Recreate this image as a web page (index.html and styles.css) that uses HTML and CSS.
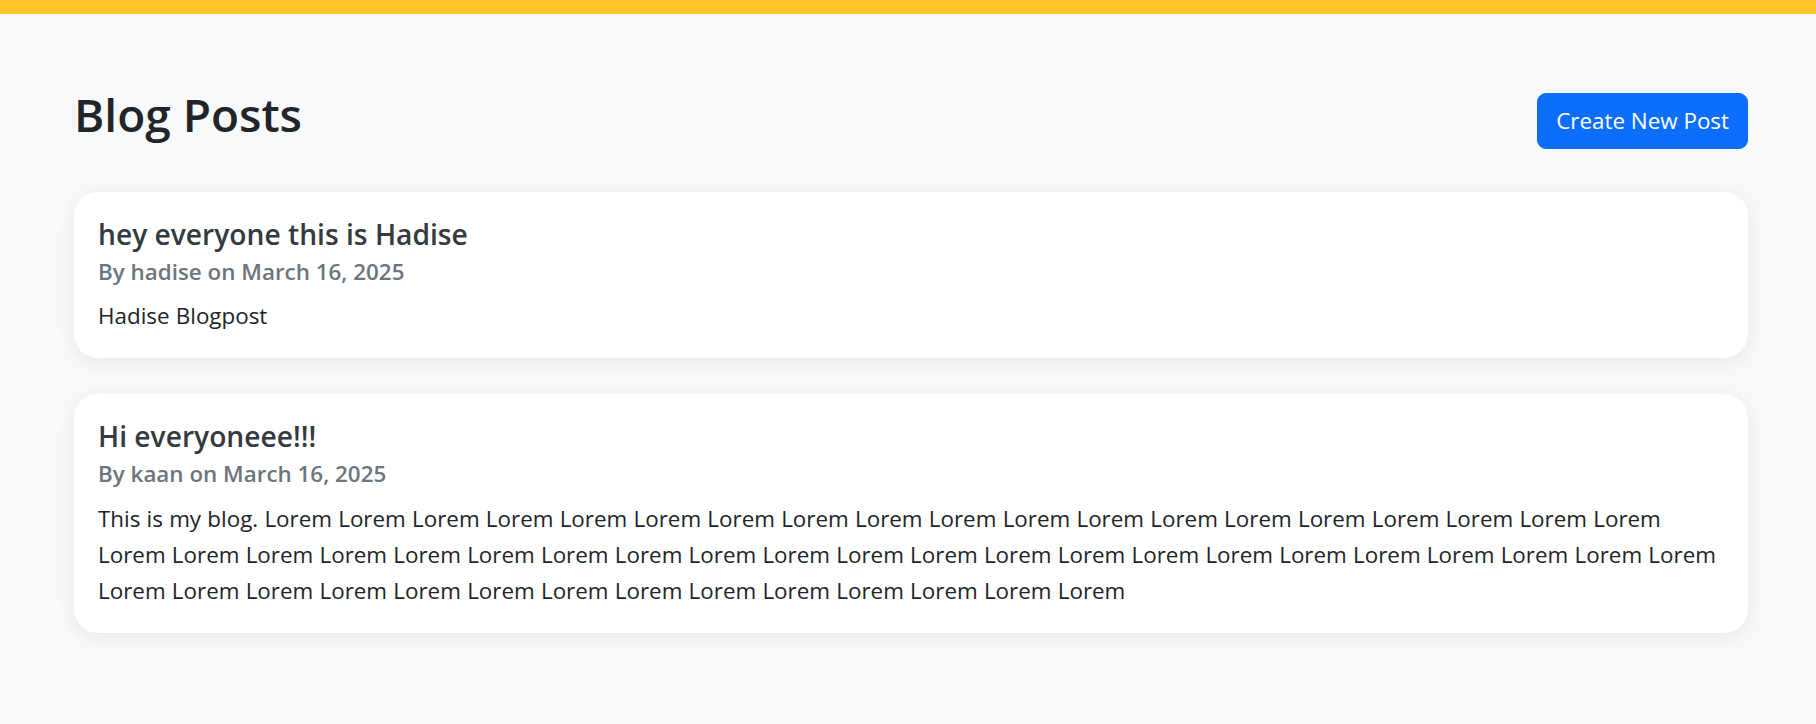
FILE: index.html
```html
<!DOCTYPE html>
<html lang="en">
<head>
<meta charset="utf-8">
<title>Blog Posts</title>
<link rel="stylesheet" href="styles.css">
</head>
<body>
<div class="topbar"></div>
<main class="container">
  <div class="page-header">
    <h1 class="page-title">Blog Posts</h1>
    <a class="btn-primary" href="#">Create New Post</a>
  </div>
  <article class="card">
    <h5 class="card-title">hey everyone this is Hadise</h5>
    <h6 class="card-subtitle">By hadise on March 16, 2025</h6>
    <p class="card-text">Hadise Blogpost</p>
  </article>
  <article class="card">
    <h5 class="card-title">Hi everyoneee!!!</h5>
    <h6 class="card-subtitle">By kaan on March 16, 2025</h6>
    <p class="card-text">This is my blog. Lorem Lorem Lorem Lorem Lorem Lorem Lorem Lorem Lorem Lorem Lorem Lorem Lorem Lorem Lorem Lorem Lorem Lorem Lorem Lorem Lorem Lorem Lorem Lorem Lorem Lorem Lorem Lorem Lorem Lorem Lorem Lorem Lorem Lorem Lorem Lorem Lorem Lorem Lorem Lorem Lorem Lorem Lorem Lorem Lorem Lorem Lorem Lorem Lorem Lorem Lorem Lorem Lorem Lorem Lorem</p>
  </article>
</main>
</body>
</html>
```
FILE: styles.css
```css
* { box-sizing: border-box; }

body {
  margin: 0;
  background: #f8f9fa;
  font-family: "Open Sans", "Noto Sans", sans-serif;
  font-size: 22.4px;
  line-height: 36px;
  color: #212529;
}

.topbar {
  height: 14px;
  background: #ffc72c;
}

.container {
  max-width: 1674px;
  margin: 0 68px 0 74px;
  padding-top: 72px;
}

.page-header {
  display: flex;
  justify-content: space-between;
  align-items: center;
  margin-bottom: 36px;
}

.page-title {
  margin: 0 0 12px;
  font-size: 46px;
  line-height: 57.6px;
  font-weight: 600;
  color: #212529;
}

.btn-primary {
  display: inline-block;
  padding: 9px 18px;
  border: 1px solid #0d6efd;
  border-radius: 9px;
  background: #0d6efd;
  color: #fff;
  font-size: 22.4px;
  line-height: 36px;
  text-decoration: none;
}

.card {
  background: #fff;
  border-radius: 24px;
  padding: 24px;
  margin-bottom: 36px;
  box-shadow: 0 4px 20px rgba(0, 0, 0, 0.07);
}

.card-title {
  margin: 0 0 6px;
  font-size: 28.2px;
  line-height: 36px;
  font-weight: 600;
  color: #343a40;
}

.card-subtitle {
  margin: 0 0 12px;
  font-size: 22.4px;
  line-height: 28.8px;
  font-weight: 600;
  color: #6c757d;
}

.card-text {
  margin: 0;
  font-size: 22.4px;
  line-height: 36px;
  word-spacing: 0.4px;
  color: #212529;
}
```
